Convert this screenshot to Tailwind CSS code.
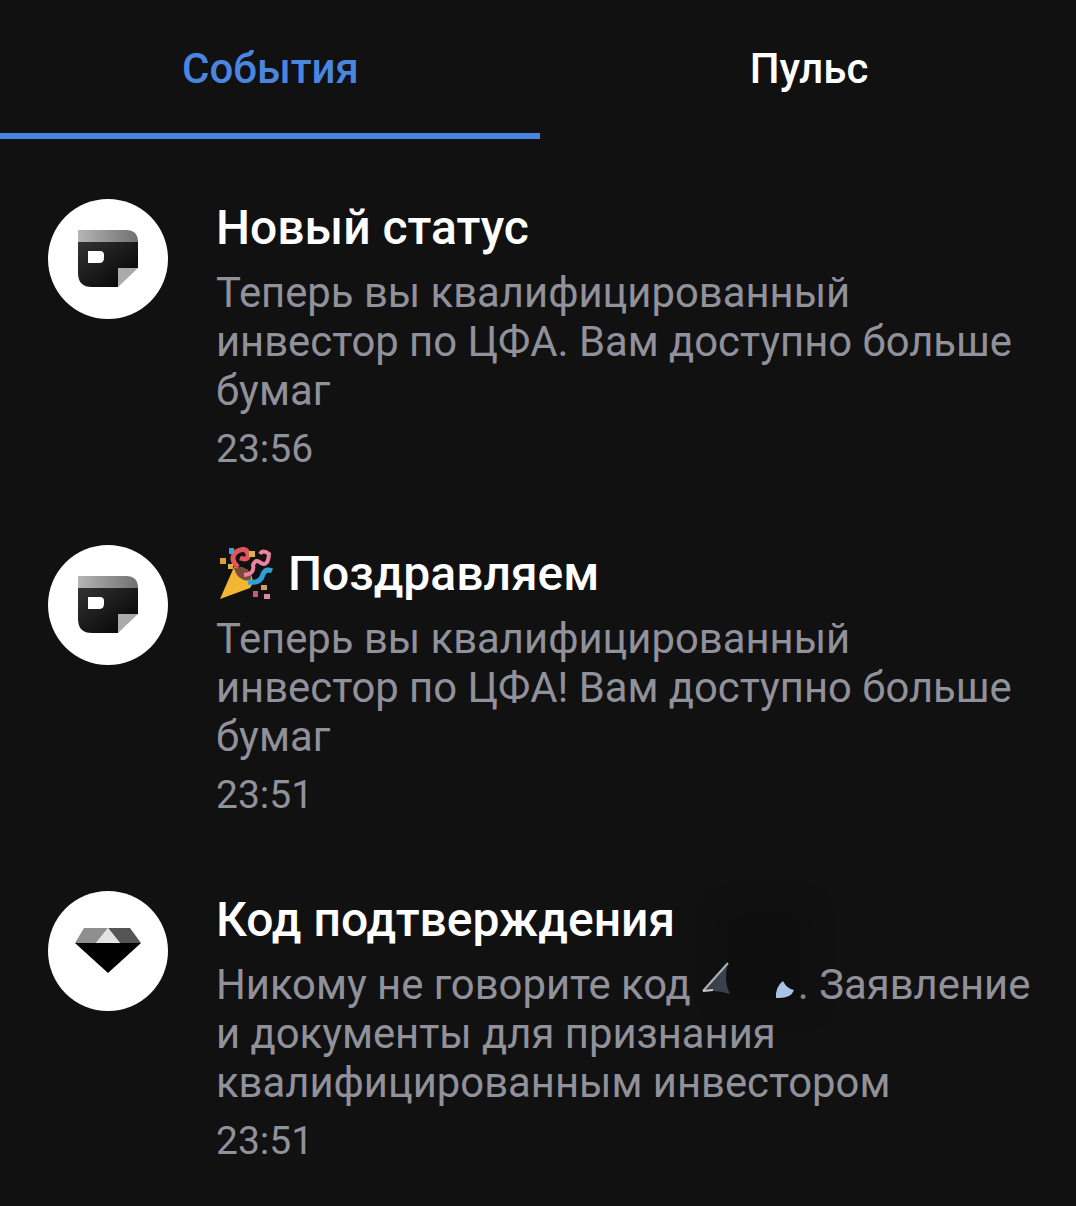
<!DOCTYPE html>
<html lang="ru">
<head>
  <meta charset="UTF-8">
  <title>События</title>
  <script src="https://cdn.jsdelivr.net/npm/@tailwindcss/browser@4"></script>
</head>
<body class="bg-[#111112] font-['Roboto',sans-serif] w-[1076px] h-[1206px] overflow-hidden">

  <!-- Tabs -->
  <nav class="flex h-[139px]">
    <div class="w-[540px] h-full border-b-[6px] border-[#4a86e0] flex justify-center pt-[44px] pl-[1px]">
      <span class="text-[42px] leading-[50px] font-medium text-[#4a86e0]">События</span>
    </div>
    <div class="w-[536px] h-full flex justify-center pt-[44px] pl-[2px]">
      <span class="text-[42px] leading-[50px] font-medium text-white">Пульс</span>
    </div>
  </nav>

  <main class="pt-[60px] pl-[48px] flex flex-col">

    <!-- Новый статус -->
    <article class="flex h-[346px]">
      <div class="w-[120px] h-[120px] rounded-full bg-white flex items-center justify-center shrink-0">
        <svg width="60" height="58" viewBox="0 0 60 58">
          <defs>
            <linearGradient id="a1" x1="0" y1="0" x2="1" y2="1"><stop offset="0" stop-color="#333"/><stop offset="1" stop-color="#000"/></linearGradient>
            <linearGradient id="a2" x1="0" y1="0" x2="1" y2="0"><stop offset="0" stop-color="#b5b5b5"/><stop offset="1" stop-color="#707070"/></linearGradient>
          </defs>
          <path d="M0 12H60V38H40V57H14Q0 57 0 43Z" fill="url(#a1)"/>
          <path d="M0 0H48Q60 0 60 12V12H0Z" fill="url(#a2)"/>
          <path d="M40 38H60L40 57Z" fill="#aaa"/>
          <path d="M10 21H22Q26 21 26 25V28Q26 33 21 33H10Z" fill="#fff"/>
        </svg>
      </div>
      <div class="ml-[49px]">
        <h2 class="text-[48px] leading-[58px] font-medium text-white -ml-[1px]">Новый статус</h2>
        <p class="text-[41.8px] leading-[49px] text-[#91919b] mt-[11px] -ml-[1px]">Теперь вы квалифицированный<br>инвестор по ЦФА. Вам доступно больше<br>бумаг</p>
        <p class="text-[39px] leading-[49px] text-[#91919b] mt-[10px] -ml-[1px]">23:56</p>
      </div>
    </article>

    <!-- Поздравляем -->
    <article class="flex h-[346px]">
      <div class="w-[120px] h-[120px] rounded-full bg-white flex items-center justify-center shrink-0">
        <svg width="60" height="58" viewBox="0 0 60 58">
          <path d="M0 12H60V38H40V57H14Q0 57 0 43Z" fill="url(#a1)"/>
          <path d="M0 0H48Q60 0 60 12V12H0Z" fill="url(#a2)"/>
          <path d="M40 38H60L40 57Z" fill="#aaa"/>
          <path d="M10 21H22Q26 21 26 25V28Q26 33 21 33H10Z" fill="#fff"/>
        </svg>
      </div>
      <div class="ml-[49px]">
        <h2 class="text-[48px] leading-[58px] font-medium text-white flex items-center">
          <svg class="ml-[2px] mr-[13px]" width="56" height="54" viewBox="0 0 56 54" fill="none">
            <path d="M1 52L15 20Q28 18 33 30Q35 36 31 41Z" fill="#f2b632"/>
            <path d="M15 21Q27 17 32 29Q33 35 25 33Q17 30 15 21Z" fill="#7a4a3a"/>
            <path d="M19 20Q10 12 17 5Q27 -1 29 7Q30 14 21 11" stroke="#e2555a" stroke-width="5"/>
            <path d="M25 28Q36 27 34 18Q37 11 42 16Q49 20 50 7Q44 2 41 7" stroke="#ee82a0" stroke-width="4"/>
            <path d="M29 35Q42 37 44 27Q47 21 53 24" stroke="#2f9fd8" stroke-width="5"/>
            <rect x="1" y="11" width="6" height="6" fill="#d8a23a"/>
            <rect x="10" y="1" width="5" height="6" fill="#4a9ad8"/>
            <rect x="30" y="4" width="6" height="6" fill="#e0b040"/>
            <rect x="9" y="17" width="5" height="5" fill="#e0b040"/>
            <rect x="42" y="38" width="6" height="5" fill="#d89a5a"/>
            <rect x="34" y="44" width="5" height="6" fill="#c95a6a"/>
            <rect x="45" y="47" width="6" height="5" fill="#d88aa8"/>
          </svg>Поздравляем</h2>
        <p class="text-[41.8px] leading-[49px] text-[#91919b] mt-[11px] -ml-[1px]">Теперь вы квалифицированный<br>инвестор по ЦФА! Вам доступно больше<br>бумаг</p>
        <p class="text-[39px] leading-[49px] text-[#91919b] mt-[10px] -ml-[1px]">23:51</p>
      </div>
    </article>

    <!-- Код подтверждения -->
    <article class="flex h-[346px] relative">
      <!-- тёмное пятно поверх скрытого кода -->
      <div class="absolute left-[672px] top-[14px] w-[92px] h-[106px] bg-black/15 blur-md"></div>
      <div class="w-[120px] h-[120px] rounded-full bg-white flex items-center justify-center shrink-0">
        <svg width="66" height="46" viewBox="0 0 66 46">
          <path d="M9 0H33L21 15H0Z" fill="#8f8f8f"/>
          <path d="M33 0H55L66 15H45Z" fill="#555"/>
          <path d="M33 0L45 15H21Z" fill="#e2e2e2"/>
          <path d="M0 15H66L33 45Z" fill="#000"/>
        </svg>
      </div>
      <div class="ml-[49px]">
        <h2 class="text-[48px] leading-[58px] font-medium text-white -ml-[1px]">Код подтверждения</h2>
        <p class="text-[41.8px] leading-[49px] text-[#91919b] mt-[11px] -ml-[1px]"><span class="inline-flex items-center">Никому не говорите код<svg class="mx-[10px] relative overflow-visible" width="87" height="48" viewBox="0 0 87 48"><path d="M2 30L27 2Q22 20 29 33Q14 29 2 30Z" fill="#3b404b"/><path d="M2 30L27 2" stroke="#aeb4be" stroke-width="2"/><path d="M2 30L12 29" stroke="#c5c9d0" stroke-width="2"/><path d="M75 37Q74 26 82 20Q86 28 93 29Q90 38 75 37Z" fill="#a9c3e4"/></svg>. Заявление</span><br>и документы для признания<br>квалифицированным инвестором</p>
        <p class="text-[39px] leading-[49px] text-[#91919b] mt-[10px] -ml-[1px]">23:51</p>
      </div>
    </article>
  </main>
</body>
</html>
